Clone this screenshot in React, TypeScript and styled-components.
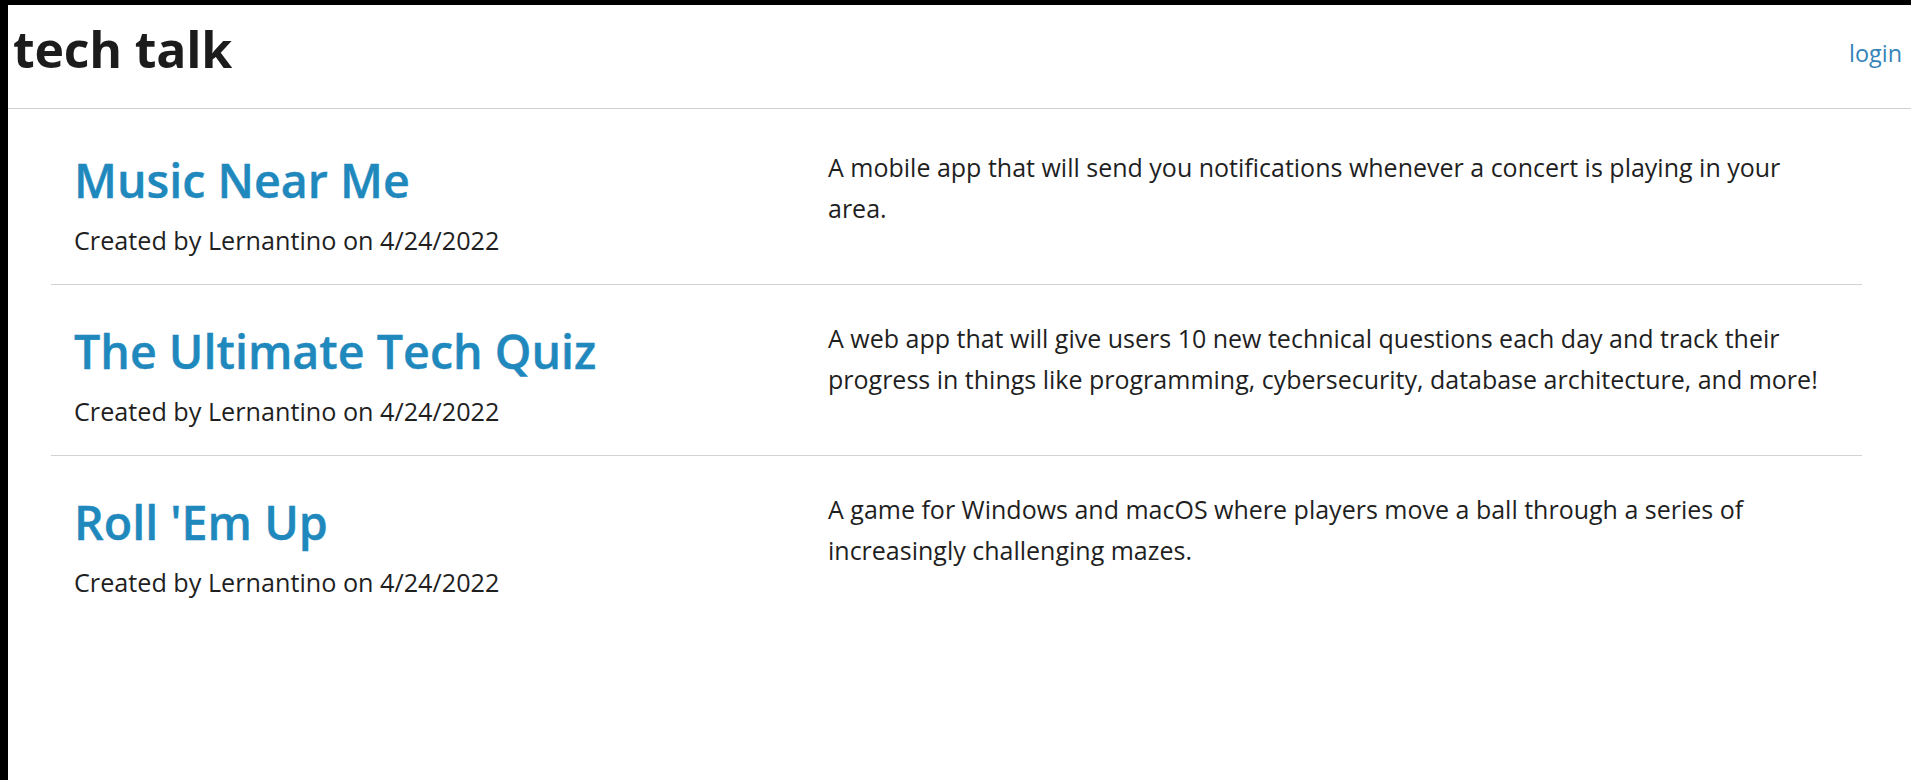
import React from "react";
import styled, { createGlobalStyle } from "styled-components";

const GlobalStyle = createGlobalStyle`
  html, body {
    margin: 0;
    padding: 0;
    background: #ffffff;
  }
  body {
    font-family: "Open Sans", "Noto Sans", sans-serif;
    color: #1f1f1f;
  }
  * { box-sizing: border-box; }
`;

const Frame = styled.div`
  min-height: 100vh;
  border-top: 5px solid #000;
  border-left: 8px solid #000;
  background: #fff;
`;

const Header = styled.header`
  display: flex;
  justify-content: space-between;
  align-items: flex-start;
  height: 104px;
  padding: 15px 9px 0 5px;
  border-bottom: 1px solid #cfcfcf;
`;

const Brand = styled.h1`
  margin: 0;
  font-size: 50px;
  line-height: 59px;
  font-weight: 700;
  color: #1c1c1c;
  letter-spacing: -0.2px;
`;

const LoginLink = styled.a`
  margin-top: 19px;
  font-size: 23.4px;
  line-height: 28px;
  color: #3584b8;
  text-decoration: none;
  cursor: pointer;
`;

const Main = styled.main`
  padding: 5px 49px 0 43px;
`;

const Card = styled.article`
  display: grid;
  grid-template-columns: minmax(0, 754fr) minmax(0, 1014fr);
  padding: 33px 20px 25px 23px;
  border-bottom: 1px solid #d2d2d2;

  &:last-child {
    border-bottom: none;
  }
`;

const Meta = styled.div`
  display: flex;
  flex-direction: column;
`;

const Title = styled.h2`
  margin: 5px 0 0;
  font-size: 46.6px;
  line-height: 56px;
  font-weight: 600;
  color: #1f89bd;
  -webkit-text-stroke: 0.4px #1f89bd;
`;

const Byline = styled.p`
  margin: 13px 0 0;
  font-size: 25.2px;
  line-height: 38px;
  color: #1f1f1f;
`;

const Description = styled.p`
  margin: 0;
  font-size: 25px;
  line-height: 40.5px;
  color: #1f1f1f;
`;

type Post = {
  title: string;
  author: string;
  date: string;
  description: string;
};

const posts: Post[] = [
  {
    title: "Music Near Me",
    author: "Lernantino",
    date: "4/24/2022",
    description:
      "A mobile app that will send you notifications whenever a concert is playing in your area.",
  },
  {
    title: "The Ultimate Tech Quiz",
    author: "Lernantino",
    date: "4/24/2022",
    description:
      "A web app that will give users 10 new technical questions each day and track their progress in things like programming, cybersecurity, database architecture, and more!",
  },
  {
    title: "Roll 'Em Up",
    author: "Lernantino",
    date: "4/24/2022",
    description:
      "A game for Windows and macOS where players move a ball through a series of increasingly challenging mazes.",
  },
];

export default function App() {
  return (
    <>
      <GlobalStyle />
      <Frame>
        <Header>
          <Brand>tech talk</Brand>
          <LoginLink href="#">login</LoginLink>
        </Header>
        <Main>
          {posts.map((p) => (
            <Card key={p.title}>
              <Meta>
                <Title>{p.title}</Title>
                <Byline>
                  Created by {p.author} on {p.date}
                </Byline>
              </Meta>
              <Description>{p.description}</Description>
            </Card>
          ))}
        </Main>
      </Frame>
    </>
  );
}
